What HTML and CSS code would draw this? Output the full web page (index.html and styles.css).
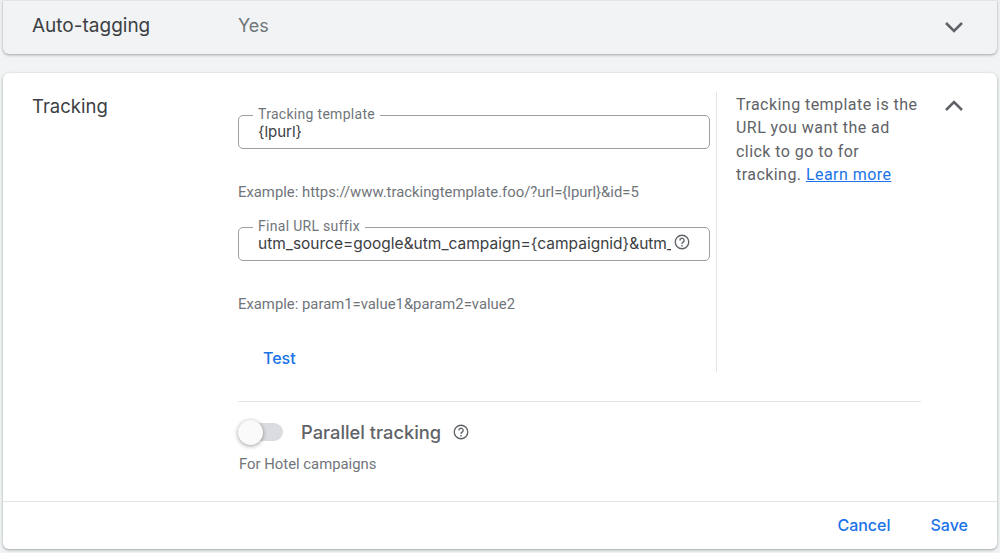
FILE: index.html
```html
<!DOCTYPE html>
<html lang="en">
<head>
  <meta charset="UTF-8">
  <meta name="viewport" content="width=device-width, initial-scale=1.0">
  <title>Campaign settings</title>
  <link rel="stylesheet" href="styles.css">
</head>
<body>
  <div class="summary-card">
    <div class="summary-title">Auto-tagging</div>
    <div class="summary-value">Yes</div>
    <svg class="chevron" viewBox="0 0 20 12"><path d="M2 2l8 8 8-8"/></svg>
  </div>

  <div class="section-card">
    <div class="section-main">
      <div class="section-title">Tracking</div>

      <div class="section-body">
        <div class="top-row">
          <div class="fields">
            <div class="field">
              <label class="field-label">Tracking template</label>
              <div class="field-value">{lpurl}</div>
            </div>
            <div class="example">Example: https://www.trackingtemplate.foo/?url={lpurl}&amp;id=5</div>

            <div class="field">
              <label class="field-label">Final URL suffix</label>
              <div class="field-value clipped">utm_source=google&amp;utm_campaign={campaignid}&amp;utm_medium=cpc</div>
              <svg class="help field-help" viewBox="0 0 18 18"><circle cx="9" cy="9" r="7.6"/><path d="M6.6 7.2a2.4 2.4 0 1 1 3.7 2c-.9.6-1.3 1-1.3 2"/><path class="dot" d="M8.2 12.4h1.6v1.6H8.2z"/></svg>
            </div>
            <div class="example">Example: param1=value1&amp;param2=value2</div>

            <a class="test-link">Test</a>
          </div>

          <div class="help-panel">
            Tracking template is the URL you want the ad click to go to for tracking. <a class="learn-more">Learn more</a>
          </div>
        </div>

        <div class="parallel">
          <div class="parallel-row">
            <div class="switch"><div class="switch-knob"></div></div>
            <span class="parallel-label">Parallel tracking</span>
            <svg class="help" viewBox="0 0 18 18"><circle cx="9" cy="9" r="7.6"/><path d="M6.6 7.2a2.4 2.4 0 1 1 3.7 2c-.9.6-1.3 1-1.3 2"/><path class="dot" d="M8.2 12.4h1.6v1.6H8.2z"/></svg>
          </div>
          <div class="parallel-note">For Hotel campaigns</div>
        </div>
      </div>

      <svg class="chevron" viewBox="0 0 20 12"><path d="M2 10l8-8 8 8"/></svg>
    </div>

    <div class="actions">
      <a class="action">Cancel</a>
      <a class="action">Save</a>
    </div>
  </div>
</body>
</html>
```

FILE: styles.css
```css
body {
  margin: 0;
  padding: 0 3px;
  height: 553px;
  box-sizing: border-box;
  overflow: hidden;
  background-color: #f1f3f4;
  font-family: Roboto, "Liberation Sans", sans-serif;
  color: #5f6368;
}
a {
  color: #1a73e8;
}
.summary-card {
  height: 54px;
  padding: 0 33px 2px 29px;
  box-sizing: border-box;
  display: flex;
  align-items: center;
  background-color: #f1f3f4;
  border-radius: 0 0 6px 6px;
  border-top: 1px solid #e3e4e6;
  box-shadow: 0 1px 3px rgba(60, 64, 67, 0.45);
}
.summary-title {
  width: 206px;
  margin-bottom: 2px;
  font-family: Inter, Roboto, sans-serif;
  font-size: 19px;
  color: #3c4043;
}
.summary-value {
  flex-grow: 1;
  margin-bottom: 2px;
  font-family: Inter, Roboto, sans-serif;
  font-size: 18px;
  color: #70757a;
}
.chevron {
  width: 20px;
  height: 12px;
  flex-shrink: 0;
  fill: none;
  stroke: #5f6368;
  stroke-width: 2.5;
}
.section-card {
  margin-top: 19px;
  height: 476px;
  display: flex;
  flex-direction: column;
  background-color: #ffffff;
  border-radius: 6px;
  box-shadow: 0 1px 3px rgba(60, 64, 67, 0.45);
}
.section-main {
  flex-grow: 1;
  display: flex;
  padding: 19px 33px 0 29px;
}
.section-main .chevron {
  margin: 8px 0 0 auto;
}
.section-title {
  width: 206px;
  flex-shrink: 0;
  font-family: Inter, Roboto, sans-serif;
  font-size: 18.5px;
  line-height: 28px;
  color: #3c4043;
}
.section-body {
  width: 683px;
}
.top-row {
  display: flex;
  height: 280px;
}
.fields {
  width: 479px;
  padding: 23px 6px 0 0;
  box-sizing: border-box;
  border-right: 1px solid #e3e4e6;
  flex-shrink: 0;
}
.field {
  position: relative;
  height: 34px;
  box-sizing: border-box;
  border: 1px solid #9aa0a6;
  border-radius: 5px;
  padding: 0 38px 0 19px;
  display: flex;
  align-items: center;
}
.field-label {
  position: absolute;
  left: 14px;
  top: -10px;
  padding: 0 5px;
  background-color: #ffffff;
  font-size: 14px;
  line-height: 16px;
  letter-spacing: 0.3px;
  color: #70757a;
}
.field-value {
  font-family: Inter, Roboto, sans-serif;
  font-size: 15px;
  line-height: 20px;
  color: #3c4043;
  white-space: nowrap;
}
.clipped {
  overflow: hidden;
  font-size: 15.5px;
}
.help {
  width: 16px;
  height: 16px;
  fill: none;
  stroke: #5f6368;
  stroke-width: 1.5;
}
.help .dot {
  fill: #5f6368;
  stroke: none;
}
.field-help {
  position: absolute;
  right: 19px;
  top: 6px;
}
.example {
  margin: 35px 0 27px;
  font-size: 14.85px;
  line-height: 16px;
  color: #70757a;
}
.test-link {
  display: block;
  margin: 36px 0 0 25px;
  font-family: Inter, Roboto, sans-serif;
  font-size: 16px;
  font-weight: 500;
  line-height: 20px;
}
.help-panel {
  padding: 1px 0 0 19px;
  font-size: 16px;
  line-height: 23.4px;
  width: 205px;
  box-sizing: border-box;
  letter-spacing: 0.45px;
}
.learn-more {
  text-decoration: underline;
}
.parallel {
  margin-top: 29px;
  width: 683px;
  border-top: 1px solid #e3e4e6;
}
.parallel-row {
  display: flex;
  align-items: center;
  height: 60px;
}
.switch {
  position: relative;
  width: 43px;
  height: 18px;
  margin: 0 18px 0 2px;
  border-radius: 9px;
  background-color: #dadce0;
}
.switch-knob {
  position: absolute;
  left: -2px;
  top: -3px;
  width: 25px;
  height: 25px;
  border-radius: 50%;
  background-color: #fafafa;
  box-shadow: 0 1px 4px rgba(0, 0, 0, 0.4);
}
.parallel-label {
  font-family: Inter, Roboto, sans-serif;
  font-size: 18.3px;
  font-weight: 500;
  margin-right: 12px;
  color: #5f6368;
}
.parallel-note {
  margin: -7px 0 0 1px;
  font-size: 14.85px;
  line-height: 18px;
  color: #70757a;
}
.actions {
  height: 48px;
  padding: 0 29px 2px 0;
  box-sizing: border-box;
  border-top: 1px solid #e3e4e6;
  display: flex;
  justify-content: flex-end;
  align-items: center;
  gap: 40px;
}
.action {
  font-family: Inter, Roboto, sans-serif;
  font-size: 16px;
  font-weight: 500;
}
```
